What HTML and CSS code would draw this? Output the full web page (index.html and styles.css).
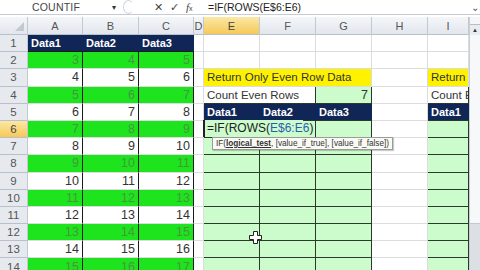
FILE: index.html
```html
<!DOCTYPE html>
<html lang="en">
<head>
    <meta charset="UTF-8">
    <title>Return Only Even Row Data</title>
    <link rel="stylesheet" href="styles.css">
</head>
<body>
    <div class="formula-bar">
        <div class="name-box">COUNTIF</div>
        <div class="name-arrow">&#9662;</div>
        <div class="grip"></div>
        <div class="fx-buttons">
            <span class="btn-x">&#10005;</span>
            <span class="btn-ok">&#10003;</span>
            <span class="btn-fx"><i>f</i><small>x</small></span>
        </div>
        <div class="formula">=IF(ROWS(E$6:E6)</div>
        <div class="expand">&#8964;</div>
    </div>

    <div class="sheet-area">
        <div class="grid">
            <!-- column headers -->
            <div class="c corner"><span class="tri"></span></div>
            <div class="c h">A</div>
            <div class="c h">B</div>
            <div class="c h">C</div>
            <div class="c h">D</div>
            <div class="c h sel">E</div>
            <div class="c h">F</div>
            <div class="c h">G</div>
            <div class="c h">H</div>
            <div class="c h">I</div>

            <!-- row 1 -->
            <div class="c rh">1</div>
            <div class="c d navy">Data1</div>
            <div class="c d navy">Data2</div>
            <div class="c d navy">Data3</div>
            <div class="c"></div>
            <div class="c"></div>
            <div class="c"></div>
            <div class="c"></div>
            <div class="c"></div>
            <div class="c"></div>

            <!-- row 2 -->
            <div class="c rh">2</div>
            <div class="c d num even">3</div>
            <div class="c d num even">4</div>
            <div class="c d num even">5</div>
            <div class="c"></div>
            <div class="c"></div>
            <div class="c"></div>
            <div class="c"></div>
            <div class="c"></div>
            <div class="c"></div>

            <!-- row 3 -->
            <div class="c rh">3</div>
            <div class="c d num">4</div>
            <div class="c d num">5</div>
            <div class="c d num">6</div>
            <div class="c"></div>
            <div class="c yellow span3">Return Only Even Row Data</div>
            <div class="c"></div>
            <div class="c yellow">Return</div>

            <!-- row 4 -->
            <div class="c rh">4</div>
            <div class="c d num even">5</div>
            <div class="c d num even">6</div>
            <div class="c d num even">7</div>
            <div class="c"></div>
            <div class="c out span2">Count Even Rows</div>
            <div class="c out num light">7</div>
            <div class="c"></div>
            <div class="c out">Count E</div>

            <!-- row 5 -->
            <div class="c rh">5</div>
            <div class="c d num">6</div>
            <div class="c d num">7</div>
            <div class="c d num">8</div>
            <div class="c"></div>
            <div class="c out navy">Data1</div>
            <div class="c out navy">Data2</div>
            <div class="c out navy">Data3</div>
            <div class="c"></div>
            <div class="c out navy">Data1</div>

            <!-- row 6 -->
            <div class="c rh sel">6</div>
            <div class="c d num even">7</div>
            <div class="c d num even">8</div>
            <div class="c d num even">9</div>
            <div class="c"></div>
            <div class="c out light active">
                <span class="editor">=IF(ROWS(<span class="ref">E$6:E6</span>)</span>
                <div class="tip">IF(<b>logical_test</b>, [value_if_true], [value_if_false])</div>
            </div>
            <div class="c out light"></div>
            <div class="c out light"></div>
            <div class="c"></div>
            <div class="c out light"></div>

            <!-- row 7 -->
            <div class="c rh">7</div>
            <div class="c d num">8</div>
            <div class="c d num">9</div>
            <div class="c d num">10</div>
            <div class="c"></div>
            <div class="c out light"></div>
            <div class="c out light"></div>
            <div class="c out light"></div>
            <div class="c"></div>
            <div class="c out light"></div>

            <!-- row 8 -->
            <div class="c rh">8</div>
            <div class="c d num even">9</div>
            <div class="c d num even">10</div>
            <div class="c d num even">11</div>
            <div class="c"></div>
            <div class="c out light"></div>
            <div class="c out light"></div>
            <div class="c out light"></div>
            <div class="c"></div>
            <div class="c out light"></div>

            <!-- row 9 -->
            <div class="c rh">9</div>
            <div class="c d num">10</div>
            <div class="c d num">11</div>
            <div class="c d num">12</div>
            <div class="c"></div>
            <div class="c out light"></div>
            <div class="c out light"></div>
            <div class="c out light"></div>
            <div class="c"></div>
            <div class="c out light"></div>

            <!-- row 10 -->
            <div class="c rh">10</div>
            <div class="c d num even">11</div>
            <div class="c d num even">12</div>
            <div class="c d num even">13</div>
            <div class="c"></div>
            <div class="c out light"></div>
            <div class="c out light"></div>
            <div class="c out light"></div>
            <div class="c"></div>
            <div class="c out light"></div>

            <!-- row 11 -->
            <div class="c rh">11</div>
            <div class="c d num">12</div>
            <div class="c d num">13</div>
            <div class="c d num">14</div>
            <div class="c"></div>
            <div class="c out light"></div>
            <div class="c out light"></div>
            <div class="c out light"></div>
            <div class="c"></div>
            <div class="c out light"></div>

            <!-- row 12 -->
            <div class="c rh">12</div>
            <div class="c d num even">13</div>
            <div class="c d num even">14</div>
            <div class="c d num even">15</div>
            <div class="c"></div>
            <div class="c out light"></div>
            <div class="c out light"></div>
            <div class="c out light"></div>
            <div class="c"></div>
            <div class="c out light"></div>

            <!-- row 13 -->
            <div class="c rh">13</div>
            <div class="c d num">14</div>
            <div class="c d num">15</div>
            <div class="c d num">16</div>
            <div class="c"></div>
            <div class="c out light"></div>
            <div class="c out light"></div>
            <div class="c out light"></div>
            <div class="c"></div>
            <div class="c out light"></div>

            <!-- row 14 -->
            <div class="c rh">14</div>
            <div class="c d num even">15</div>
            <div class="c d num even">16</div>
            <div class="c d num even">17</div>
            <div class="c"></div>
            <div class="c out light"></div>
            <div class="c out light"></div>
            <div class="c out light"></div>
            <div class="c"></div>
            <div class="c out light"></div>
        </div>

        <div class="vscroll">
            <div class="split"></div>
            <div class="arrow-up">&#9650;</div>
            <div class="thumb"></div>
            <div class="track"></div>
        </div>

        <svg class="cursor" width="13" height="13" viewBox="0 0 13 13">
            <path d="M4.5 0.5h4v4h4v4h-4v4h-4v-4h-4v-4h4z" fill="#fff" stroke="#222" stroke-width="1"/>
        </svg>
    </div>
</body>
</html>
```

FILE: styles.css
```css
body {
    margin: 0;
    width: 480px;
    height: 270px;
    overflow: hidden;
    background: #fff;
    font-family: 'Liberation Sans', Arial, sans-serif;
    color: #222;
}
.formula-bar {
    display: flex;
    align-items: center;
    height: 14px;
    border-bottom: 1px solid #c6ccd4;
    margin-bottom: 2px;
    font-size: 10px;
    background: #fff;
}
.name-box {
    width: 112px;
    text-align: center;
    color: #444;
    font-size: 10.5px;
    letter-spacing: 0.2px;
}
.name-arrow {
    width: 10px;
    font-size: 8px;
    color: #333;
}
.grip {
    width: 9px;
    height: 12px;
    margin-left: 1px;
    border-radius: 50%;
    border: 1px solid #d3d8de;
    border-right-color: transparent;
}
.fx-buttons {
    display: flex;
    gap: 7px;
    margin-left: 20px;
    width: 52px;
    color: #444;
    font-size: 10.5px;
}
.btn-fx i {
    font-family: 'Liberation Serif', serif;
    font-size: 11px;
}
.btn-fx small {
    font-size: 7px;
}
.formula {
    margin-left: 2px;
    flex: 1;
    font-size: 10.5px;
    color: #222;
}
.expand {
    width: 11px;
    text-align: center;
    font-size: 10px;
    color: #555;
}
.sheet-area {
    position: relative;
    display: flex;
}
.grid {
    display: grid;
    grid-template-columns: 28px 55px 56px 55px 10px 56px 56px 56px 56px 41px;
    grid-template-rows: 18px;
    grid-auto-rows: 17.2px;
    width: 469px;
}
.c {
    box-sizing: border-box;
    display: flex;
    align-items: center;
    padding: 0 3px;
    border-right: 1px solid #dadcde;
    border-bottom: 1px solid #dadcde;
    white-space: nowrap;
    overflow: hidden;
    font-size: 11.5px;
    color: #333;
}
.h, .rh, .corner {
    justify-content: center;
    background: linear-gradient(#f4f6f9, #e2e7ed);
    border-right: 1px solid #c3c9d1;
    border-bottom: 1px solid #b9c0c9;
    color: #555;
    font-size: 11px;
    padding: 0;
}
.rh {
    font-size: 11.5px;
    background: #e6eaef;
}
.h.sel, .rh.sel {
    background: linear-gradient(#fbe7a6, #f6c957);
    color: #444;
}
.corner {
    position: relative;
}
.tri {
    position: absolute;
    right: 3px;
    bottom: 3px;
    width: 0;
    height: 0;
    border-left: 9px solid transparent;
    border-bottom: 9px solid #c2c8cf;
}
.num {
    justify-content: flex-end;
    font-size: 12.5px;
}
.d {
    border-right: 1px solid #1a1a1a;
}
.even {
    background: #1ee41e;
    color: #48963f;
}
.navy {
    background: #0f2657;
    color: #fff;
    font-weight: bold;
    font-size: 11px;
    border-right-color: #0f2657;
    border-bottom-color: #1a1a1a;
}
.out {
    border-right: 1px solid #2a3a2a;
    border-bottom: 1px solid #2a3a2a;
}
.light {
    background: #ccfccc;
}
.yellow {
    background: #fff200;
    color: #333;
}
.span3 {
    grid-column: span 3;
}
.span2 {
    grid-column: span 2;
}
.out.navy {
    border-right-color: #0f2657;
}
.active {
    position: relative;
    overflow: visible;
    z-index: 2;
}
.editor {
    position: absolute;
    left: -1px;
    top: -1px;
    height: 17px;
    width: 100px;
    padding-left: 2px;
    box-sizing: border-box;
    display: flex;
    align-items: center;
    background: #ccfccc;
    border-left: 2px solid #222;
    font-size: 12px;
    color: #222;
}
.ref {
    color: #2a5fb0;
}
.tip {
    position: absolute;
    left: 8px;
    top: 16px;
    padding: 1px 3px;
    background: #fafaf4;
    border: 1px solid #9a9a9a;
    box-shadow: 1px 1px 1px rgba(0, 0, 0, 0.2);
    font-size: 8.2px;
    color: #333;
    white-space: nowrap;
}
.tip b {
    text-decoration: underline;
}
.vscroll {
    width: 11px;
    display: flex;
    flex-direction: column;
    background: #e9ecf0;
    border-left: 1px solid #c9ced6;
    box-sizing: border-box;
}
.split {
    height: 7px;
    border-bottom: 1px solid #b7bec8;
    background: #f4f6f8;
}
.arrow-up {
    height: 10px;
    font-size: 6px;
    text-align: center;
    color: #333;
    line-height: 10px;
}
.thumb {
    height: 188px;
    background: #f7f8fa;
    border-bottom: 1px solid #c3c9d1;
}
.track {
    flex: 1;
    background: #dcdfe4;
}
.cursor {
    position: absolute;
    left: 249px;
    top: 214px;
}
```
